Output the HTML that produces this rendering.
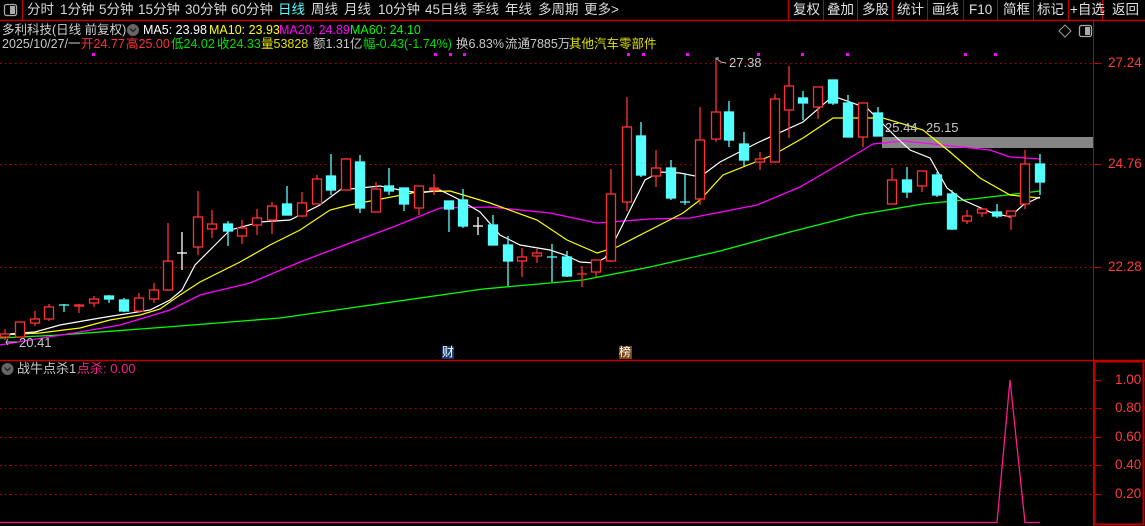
<!DOCTYPE html>
<html><head><meta charset="utf-8"><style>
html,body{margin:0;padding:0;background:#000;width:1145px;height:526px;overflow:hidden;}
body{position:relative;font-family:"Liberation Sans","Noto Sans CJK SC",sans-serif;}
.t{position:absolute;white-space:nowrap;font-size:13px;line-height:14px;}
.top{top:3px;color:#d8d8d8;font-size:13.5px;}
.btn{top:3px;color:#e0e0e0;font-size:13.5px;}
.i1{top:23px;font-size:12.5px;}
.i2{top:37px;font-size:12.5px;}
.ax{color:#ff3a3a;font-size:13.5px;}
</style></head><body>
<svg width="1145" height="526" style="position:absolute;left:0;top:0" xmlns="http://www.w3.org/2000/svg">
<!-- frame -->
<line x1="0" y1="20.5" x2="1145" y2="20.5" stroke="#c00000" stroke-width="1.5"/>
<line x1="22.5" y1="0" x2="22.5" y2="20" stroke="#c00000"/>
<rect x="4.5" y="4.5" width="12" height="11" rx="2" fill="none" stroke="#aaa" stroke-width="1.3"/>
<rect x="10" y="6" width="5" height="8" fill="#aaa"/>
<g stroke="#c00000"><line x1="788.5" y1="0" x2="788.5" y2="20"/><line x1="823.5" y1="0" x2="823.5" y2="20"/><line x1="857.5" y1="0" x2="857.5" y2="20"/><line x1="892.5" y1="0" x2="892.5" y2="20"/><line x1="927.5" y1="0" x2="927.5" y2="20"/><line x1="963.5" y1="0" x2="963.5" y2="20"/><line x1="997.5" y1="0" x2="997.5" y2="20"/><line x1="1033.5" y1="0" x2="1033.5" y2="20"/><line x1="1068.5" y1="0" x2="1068.5" y2="20"/><line x1="1102.5" y1="0" x2="1102.5" y2="20"/></g>
<line x1="1093.5" y1="20" x2="1093.5" y2="526" stroke="#c00000"/>
<line x1="0" y1="360.5" x2="1145" y2="360.5" stroke="#c00000" stroke-width="1.5"/>
<rect x="1094.5" y="361.5" width="49" height="163" fill="none" stroke="#c00000" stroke-width="2"/>
<!-- top right icons -->
<path d="M1065 25 L1071 31 L1065 37 L1059 31 Z" fill="none" stroke="#999"/>
<rect x="1079.5" y="25.5" width="12" height="11" rx="2" fill="none" stroke="#aaa" stroke-width="1.3"/>
<rect x="1085" y="27" width="5" height="8" fill="#aaa"/>
<!-- grid -->
<g stroke="#c00000" stroke-dasharray="1.5 3.5">
<line x1="0" y1="63.5" x2="1093" y2="63.5"/><line x1="0" y1="164.5" x2="1093" y2="164.5"/><line x1="0" y1="267.5" x2="1093" y2="267.5"/>
<line x1="0" y1="408.5" x2="1093" y2="408.5"/><line x1="0" y1="437.5" x2="1093" y2="437.5"/><line x1="0" y1="465.5" x2="1093" y2="465.5"/><line x1="0" y1="494.5" x2="1093" y2="494.5"/>
</g>
<g stroke="#c00000"><line x1="1094" y1="63.5" x2="1101" y2="63.5"/><line x1="1094" y1="164.5" x2="1101" y2="164.5"/><line x1="1094" y1="267.5" x2="1101" y2="267.5"/>
<line x1="1094" y1="380.5" x2="1101" y2="380.5"/><line x1="1094" y1="408.5" x2="1101" y2="408.5"/><line x1="1094" y1="437.5" x2="1101" y2="437.5"/><line x1="1094" y1="465.5" x2="1101" y2="465.5"/><line x1="1094" y1="494.5" x2="1101" y2="494.5"/></g>
<!-- pink dots -->
<g fill="#ff00ff"><rect x="92" y="53" width="3" height="3"/><rect x="434" y="53" width="3" height="3"/><rect x="449" y="53" width="3" height="3"/><rect x="463" y="53" width="3" height="3"/><rect x="627" y="53" width="3" height="3"/><rect x="642" y="53" width="3" height="3"/><rect x="686" y="53" width="3" height="3"/><rect x="757" y="53" width="3" height="3"/><rect x="801" y="53" width="3" height="3"/><rect x="846" y="53" width="3" height="3"/><rect x="964" y="53" width="3" height="3"/><rect x="994" y="53" width="3" height="3"/></g>
<!-- gray band -->
<rect x="882" y="137" width="211" height="11" fill="#858585"/>
<!-- MA lines -->
<polyline fill="none" stroke="#00ff00" stroke-width="1.3" points="0,338 60,335 167,327 280,318 350,308 483,289 583,280 650,267 720,251 790,232 857,215 923,204 973,199 1040,191"/>
<polyline fill="none" stroke="#ff00ff" stroke-width="1.3" points="0,345 30,340 80,332 120,325 170,310 200,295 250,283 300,262 350,243 393,227 440,208 490,207 550,213 597,223 650,219 690,218 757,205 800,187 843,162 873,144 903,141 943,145 990,150 1010,157 1040,159"/>
<polyline fill="none" stroke="#ffff00" stroke-width="1.2" points="0,335 40,333 80,328 110,320 140,315 160,309 180,295 200,282 240,262 270,245 300,230 330,210 350,205 417,192 450,191 490,203 537,220 567,240 597,253 617,247 650,230 683,213 700,200 723,175 773,155 803,138 833,118 883,118 923,130 950,152 980,178 1010,195 1040,198"/>
<polyline fill="none" stroke="#ffffff" stroke-width="1.2" points="0,335 20,333 35,332 60,325 100,318 150,310 170,300 182,290 195,265 215,245 230,230 260,222 290,220 320,205 340,190 360,188 380,186 400,190 420,193 440,190 460,200 480,212 500,235 520,245 550,250 565,255 580,262 595,263 605,258 615,240 630,210 645,180 660,172 680,173 700,177 720,162 757,143 803,122 833,96 867,108 897,138 910,150 930,158 947,188 963,200 990,212 1010,217 1023,205 1040,197"/>
<!-- red candles -->
<g stroke="#ff3232" stroke-width="1.3" fill="#000">
<line x1="5" y1="329" x2="5" y2="340"/><rect x="0.5" y="334" width="9" height="3"/>
<line x1="20" y1="322" x2="20" y2="337"/><rect x="15.5" y="322" width="9" height="15"/>
<line x1="35" y1="311" x2="35" y2="326"/><rect x="30.5" y="319" width="9" height="4"/>
<line x1="49" y1="304" x2="49" y2="321"/><rect x="44.5" y="307" width="9" height="12"/>
<line x1="79" y1="304" x2="79" y2="313"/><rect x="74.5" y="305" width="9" height="1" fill="#ff3232"/>
<line x1="94" y1="296" x2="94" y2="307"/><rect x="89.5" y="299" width="9" height="4"/>
<line x1="139" y1="293" x2="139" y2="312"/><rect x="134.5" y="298" width="9" height="13"/>
<line x1="154" y1="283" x2="154" y2="303"/><rect x="149.5" y="290" width="9" height="9"/>
<line x1="168" y1="223" x2="168" y2="291"/><rect x="163.5" y="261" width="9" height="29"/>
<line x1="198" y1="191" x2="198" y2="255"/><rect x="193.5" y="217" width="9" height="30"/>
<line x1="212" y1="210" x2="212" y2="238"/><rect x="207.5" y="224" width="9" height="5"/>
<line x1="242" y1="220" x2="242" y2="244"/><rect x="237.5" y="228" width="9" height="8"/>
<line x1="257" y1="209" x2="257" y2="235"/><rect x="252.5" y="218" width="9" height="7"/>
<line x1="272" y1="202" x2="272" y2="234"/><rect x="267.5" y="206" width="9" height="14"/>
<line x1="302" y1="192" x2="302" y2="217"/><rect x="297.5" y="203" width="9" height="13"/>
<line x1="317" y1="175" x2="317" y2="204"/><rect x="312.5" y="179" width="9" height="25"/>
<line x1="346" y1="158" x2="346" y2="190"/><rect x="341.5" y="159" width="9" height="31"/>
<line x1="376" y1="182" x2="376" y2="212"/><rect x="371.5" y="189" width="9" height="23"/>
<line x1="419" y1="186" x2="419" y2="215"/><rect x="414.5" y="186" width="9" height="22"/>
<line x1="434" y1="174" x2="434" y2="195"/><rect x="429.5" y="188" width="9" height="2" fill="#ff3232"/>
<line x1="522" y1="248" x2="522" y2="277"/><rect x="517.5" y="257" width="9" height="4"/>
<line x1="537" y1="249" x2="537" y2="263"/><rect x="532.5" y="253" width="9" height="3"/>
<line x1="582" y1="266" x2="582" y2="287"/><line x1="577" y1="274" x2="587" y2="274"/>
<line x1="596" y1="260" x2="596" y2="277"/><rect x="591.5" y="260" width="9" height="12"/>
<line x1="611" y1="169" x2="611" y2="262"/><rect x="606.5" y="194" width="9" height="67"/>
<line x1="627" y1="97" x2="627" y2="211"/><rect x="622.5" y="127" width="9" height="75"/>
<line x1="656" y1="150" x2="656" y2="187"/><rect x="651.5" y="168" width="9" height="8"/>
<line x1="700" y1="107" x2="700" y2="205"/><rect x="695.5" y="140" width="9" height="59"/>
<line x1="716" y1="60" x2="716" y2="142"/><rect x="711.5" y="112" width="9" height="27"/>
<line x1="760" y1="152" x2="760" y2="170"/><rect x="755.5" y="159" width="9" height="3"/>
<line x1="775" y1="94" x2="775" y2="163"/><rect x="770.5" y="99" width="9" height="63"/>
<line x1="789" y1="66" x2="789" y2="138"/><rect x="784.5" y="86" width="9" height="24"/>
<line x1="818" y1="87" x2="818" y2="119"/><rect x="813.5" y="87" width="9" height="20"/>
<line x1="863" y1="103" x2="863" y2="147"/><rect x="858.5" y="103" width="9" height="34"/>
<line x1="892" y1="168" x2="892" y2="204"/><rect x="887.5" y="180" width="9" height="24"/>
<line x1="922" y1="171" x2="922" y2="192"/><rect x="917.5" y="171" width="9" height="15"/>
<line x1="967" y1="210" x2="967" y2="224"/><rect x="962.5" y="216" width="9" height="5"/>
<line x1="982" y1="208" x2="982" y2="217"/><rect x="977.5" y="209" width="9" height="4"/>
<line x1="1011" y1="211" x2="1011" y2="230"/><rect x="1006.5" y="211" width="9" height="5"/>
<line x1="1025" y1="150" x2="1025" y2="209"/><rect x="1020.5" y="164" width="9" height="40"/>
</g>
<!-- cyan candles -->
<g stroke="#54ffff" stroke-width="1.3" fill="#54ffff">
<line x1="64" y1="304" x2="64" y2="312"/><line x1="59" y1="305" x2="69" y2="305"/>
<line x1="109" y1="295" x2="109" y2="303"/><rect x="104.5" y="296" width="9" height="3"/>
<line x1="124" y1="298" x2="124" y2="312"/><rect x="119.5" y="300" width="9" height="11"/>
<line x1="228" y1="221" x2="228" y2="246"/><rect x="223.5" y="224" width="9" height="7"/>
<line x1="287" y1="186" x2="287" y2="215"/><rect x="282.5" y="204" width="9" height="11"/>
<line x1="331" y1="154" x2="331" y2="195"/><rect x="326.5" y="176" width="9" height="14"/>
<line x1="360" y1="155" x2="360" y2="213"/><rect x="355.5" y="162" width="9" height="46"/>
<line x1="389" y1="168" x2="389" y2="195"/><rect x="384.5" y="186" width="9" height="5"/>
<line x1="404" y1="188" x2="404" y2="211"/><rect x="399.5" y="188" width="9" height="16"/>
<line x1="449" y1="201" x2="449" y2="232"/><rect x="444.5" y="201" width="9" height="8"/>
<line x1="463" y1="189" x2="463" y2="228"/><rect x="458.5" y="200" width="9" height="26"/>
<line x1="493" y1="215" x2="493" y2="245"/><rect x="488.5" y="225" width="9" height="20"/>
<line x1="508" y1="236" x2="508" y2="286"/><rect x="503.5" y="245" width="9" height="16"/>
<line x1="552" y1="244" x2="552" y2="282"/><line x1="547" y1="257" x2="557" y2="257"/>
<line x1="567" y1="251" x2="567" y2="277"/><rect x="562.5" y="257" width="9" height="19"/>
<line x1="641" y1="122" x2="641" y2="177"/><rect x="636.5" y="136" width="9" height="39"/>
<line x1="671" y1="160" x2="671" y2="200"/><rect x="666.5" y="168" width="9" height="30"/>
<line x1="685" y1="174" x2="685" y2="205"/><line x1="680" y1="202" x2="690" y2="202"/>
<line x1="729" y1="101" x2="729" y2="147"/><rect x="724.5" y="112" width="9" height="28"/>
<line x1="744" y1="132" x2="744" y2="166"/><rect x="739.5" y="144" width="9" height="16"/>
<line x1="803" y1="91" x2="803" y2="120"/><rect x="798.5" y="98" width="9" height="5"/>
<line x1="833" y1="80" x2="833" y2="105"/><rect x="828.5" y="80" width="9" height="23"/>
<line x1="848" y1="95" x2="848" y2="137"/><rect x="843.5" y="103" width="9" height="34"/>
<line x1="878" y1="107" x2="878" y2="136"/><rect x="873.5" y="113" width="9" height="23"/>
<line x1="907" y1="167" x2="907" y2="198"/><rect x="902.5" y="180" width="9" height="12"/>
<line x1="937" y1="172" x2="937" y2="197"/><rect x="932.5" y="175" width="9" height="20"/>
<line x1="952" y1="190" x2="952" y2="230"/><rect x="947.5" y="194" width="9" height="35"/>
<line x1="997" y1="204" x2="997" y2="218"/><rect x="992.5" y="212" width="9" height="4"/>
<line x1="1040" y1="154" x2="1040" y2="195"/><rect x="1035.5" y="164" width="9" height="18"/>
</g>
<g stroke="#fff" stroke-width="1.3">
<line x1="182" y1="232" x2="182" y2="270"/><line x1="177" y1="253" x2="187" y2="253"/>
<line x1="478" y1="217" x2="478" y2="235"/><line x1="473" y1="226" x2="483" y2="226"/>
</g>
<!-- high/low markers -->
<path d="M716 60 L716 58 L719 58 M717 59 L721 62 L726 63" fill="none" stroke="#bbb"/>
<path d="M8 339 L6 342 L8 345 M6 342 L17 342" fill="none" stroke="#bbb"/>
<!-- badges -->
<rect x="442" y="346" width="12" height="13" fill="#143a72"/>
<rect x="619" y="346" width="13" height="13" fill="#7a4612"/>
<!-- lower indicator -->
<circle cx="7.5" cy="369" r="6" fill="#666"/>
<path d="M4.5 367.5 L7.5 370.5 L10.5 367.5" fill="none" stroke="#222" stroke-width="1.3"/>
<circle cx="133" cy="30" r="6" fill="#666"/>
<path d="M130 28.5 L133 31.5 L136 28.5" fill="none" stroke="#222" stroke-width="1.3"/>
<polyline fill="none" stroke="#ff1a8c" stroke-width="1.3" points="0,522.5 997,522.5 1010,380 1025,522.5 1040,522.5"/>
</svg>

<div class="t top" style="left:27px">分时</div>
<div class="t top" style="left:60px">1分钟</div>
<div class="t top" style="left:99px">5分钟</div>
<div class="t top" style="left:138px">15分钟</div>
<div class="t top" style="left:185px">30分钟</div>
<div class="t top" style="left:231px">60分钟</div>
<div class="t top" style="left:278px;color:#54ffff">日线</div>
<div class="t top" style="left:311px">周线</div>
<div class="t top" style="left:344px">月线</div>
<div class="t top" style="left:378px">10分钟</div>
<div class="t top" style="left:425px">45日线</div>
<div class="t top" style="left:472px">季线</div>
<div class="t top" style="left:505px">年线</div>
<div class="t top" style="left:538px">多周期</div>
<div class="t top" style="left:584px">更多&gt;</div>

<div class="t btn" style="left:793px">复权</div>
<div class="t btn" style="left:827px">叠加</div>
<div class="t btn" style="left:862px">多股</div>
<div class="t btn" style="left:897px">统计</div>
<div class="t btn" style="left:932px">画线</div>
<div class="t btn" style="left:969px">F10</div>
<div class="t btn" style="left:1003px">简框</div>
<div class="t btn" style="left:1037px">标记</div>
<div class="t btn" style="left:1070px">+自选</div>
<div class="t btn" style="left:1112px">返回</div>

<div class="t i1" style="left:2px;color:#d0d0d0">多利科技(日线 前复权)</div>
<div class="t i1" style="left:143px;color:#fff">MA5: 23.98</div>
<div class="t i1" style="left:209px;color:#ffff00">MA10: 23.93</div>
<div class="t i1" style="left:279px;color:#ff00ff">MA20: 24.89</div>
<div class="t i1" style="left:350px;color:#00ff00">MA60: 24.10</div>

<div class="t i2" style="left:2px;color:#c8c8c8">2025/10/27/一</div>
<div class="t i2" style="left:81px;color:#ff3232">开24.77</div>
<div class="t i2" style="left:126px;color:#ff3232">高25.00</div>
<div class="t i2" style="left:171px;color:#00e000">低24.02</div>
<div class="t i2" style="left:217px;color:#00e000">收24.33</div>
<div class="t i2" style="left:261px;color:#e0e000">量53828</div>
<div class="t i2" style="left:313px;color:#c8c8c8">额1.31亿</div>
<div class="t i2" style="left:363px;color:#00e000">幅-0.43(-1.74%)</div>
<div class="t i2" style="left:456px;color:#c8c8c8">换6.83%</div>
<div class="t i2" style="left:505px;color:#c8c8c8">流通7885万</div>
<div class="t i2" style="left:569px;color:#e0e000">其他汽车零部件</div>

<div class="t" style="left:729px;top:56px;color:#c8c8c8">27.38</div>
<div class="t" style="left:19px;top:336px;color:#c8c8c8">20.41</div>
<div class="t" style="left:885px;top:121px;color:#c8c8c8">25.44</div>
<div class="t" style="left:926px;top:121px;color:#c8c8c8">25.15</div>
<div class="t" style="left:442px;top:345px;color:#fff;font-size:12px">财</div>
<div class="t" style="left:619px;top:345px;color:#fff;font-size:12px">榜</div>

<div class="t ax" style="left:1108px;top:56px">27.24</div>
<div class="t ax" style="left:1108px;top:157px">24.76</div>
<div class="t ax" style="left:1108px;top:260px">22.28</div>
<div class="t ax" style="left:1115px;top:373px">1.00</div>
<div class="t ax" style="left:1115px;top:401px">0.80</div>
<div class="t ax" style="left:1115px;top:430px">0.60</div>
<div class="t ax" style="left:1115px;top:458px">0.40</div>
<div class="t ax" style="left:1115px;top:487px">0.20</div>

<div class="t" style="left:17px;top:362px;color:#c8c8c8">战牛点杀1</div>
<div class="t" style="left:77px;top:362px;color:#ff1a8c">点杀: 0.00</div>
</body></html>
